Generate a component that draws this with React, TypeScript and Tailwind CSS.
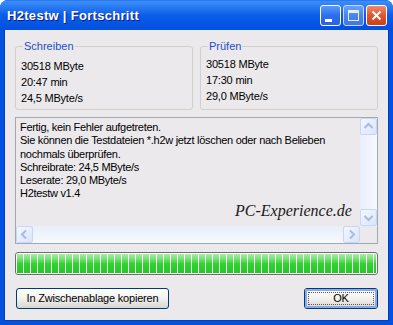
import React from "react";

const FONT = { fontFamily: '"Liberation Sans", Arial, sans-serif' };

function ScrollBtn({ dir }: { dir: "up" | "down" | "left" | "right" }) {
  const paths: Record<string, string> = {
    up: "M4.5 10 L8.5 6 L12.5 10",
    down: "M4.5 7 L8.5 11 L12.5 7",
    left: "M10 4.5 L6 8.5 L10 12.5",
    right: "M7 4.5 L11 8.5 L7 12.5",
  };
  return (
    <div className="w-[17px] h-[17px] shrink-0 rounded-[2px] border border-[#c8d6f8] bg-gradient-to-br from-[#f4f7fe] to-[#d9e4fb]">
      <svg width="15" height="15" viewBox="1 1 15 15">
        <path d={paths[dir]} fill="none" stroke="#a8bbe6" strokeWidth="2" />
      </svg>
    </div>
  );
}

function CaptionButtons() {
  return (
    <div className="flex gap-[2px] pr-[6px]">
      <div className="w-[21px] h-[21px] rounded-[3px] border border-white bg-gradient-to-b from-[#5d99f8] via-[#2d6ef0] to-[#2a63dc] relative">
        <div className="absolute left-[4px] bottom-[3px] w-[7px] h-[3px] bg-white" />
      </div>
      <div className="w-[21px] h-[21px] rounded-[3px] border border-[#c7d7fb] bg-gradient-to-b from-[#6aa0f6] via-[#4b84ee] to-[#4177e0] flex items-center justify-center">
        <div className="w-[11px] h-[11px] border border-[#e3ecfd] border-t-[3px]" />
      </div>
      <div className="w-[21px] h-[21px] rounded-[3px] border border-white bg-gradient-to-b from-[#f08a68] via-[#e2552c] to-[#c9401b] flex items-center justify-center">
        <svg width="11" height="11" viewBox="0 0 11 11">
          <path d="M1.5 1.5 L9.5 9.5 M9.5 1.5 L1.5 9.5" stroke="white" strokeWidth="2" />
        </svg>
      </div>
    </div>
  );
}

function GroupBox({ title, lines, shift }: { title: string; lines: string[]; shift?: boolean }) {
  return (
    <fieldset className="flex-1 border border-[#d2d0c8] rounded-[3px] px-[5px] pb-[1px]">
      <legend className="ml-[2px] px-[1px] text-[11px] leading-[14px] text-[#1c4fc8]">{title}</legend>
      <div className={shift ? "pt-[3px] pb-[4px]" : "pt-[5px] pb-[2px]"}>
        {lines.map((l) => (
          <div key={l} className="text-[11px] leading-[16px] tracking-[-0.2px] text-black">
            {l}
          </div>
        ))}
      </div>
    </fieldset>
  );
}

function XpButton({ children, focused, className }: { children: React.ReactNode; focused?: boolean; className: string }) {
  return (
    <button
      className={`relative h-[21px] rounded-[3px] border border-[#003c74] bg-gradient-to-b from-white via-[#f2f2ef] to-[#d8d6d0] text-[11px] tracking-[-0.2px] text-black ${className}`}
    >
      {focused && <div className="absolute inset-0 rounded-[2px] border-2 border-[#8aa9ee]" />}
      {focused && <div className="absolute inset-[3px] border border-dotted border-[#6b5a3a]" />}
      <span className="relative leading-[13px]">{children}</span>
    </button>
  );
}

export default function App() {
  const segments = Array.from({ length: 53 });
  return (
    <div className="w-[393px] h-[325px] bg-white" style={FONT}>
      <div className="flex flex-col h-full rounded-t-[8px] overflow-hidden bg-[#0052e0]">
        {/* title bar */}
        <div className="h-[30px] shrink-0 flex items-center justify-between bg-gradient-to-b from-[#3d8ef8] via-[#0b5ce8] to-[#0250de] border-t border-[#2a79f2]">
          <span className="pl-[7px] text-[13px] font-bold text-white tracking-[0.3px] [text-shadow:1px_1px_0_#0a1c88]">
            H2testw | Fortschritt
          </span>
          <CaptionButtons />
        </div>

        {/* client */}
        <div className="flex-1 flex flex-col mx-[4px] mb-[4px] bg-[#ebe9ec] border-l border-r border-b border-[#0a3bb8] px-[10px] pt-[9px]">
          <div className="flex gap-[7px]">
            <GroupBox title="Schreiben" lines={["30518 MByte", "20:47 min", "24,5 MByte/s"]} />
            <GroupBox title="Prüfen" lines={["30518 MByte", "17:30 min", "29,0 MByte/s"]} shift />
          </div>

          {/* text box */}
          <div className="relative mt-[7px] h-[127px] border border-[#a3a9b3] flex flex-col">
            <div className="flex flex-1 min-h-0">
              <div className="flex-1 pl-[4px] pt-[3px] text-[11px] leading-[13.3px] tracking-[-0.3px] text-black">
                <div>Fertig, kein Fehler aufgetreten.</div>
                <div>Sie können die Testdateien *.h2w jetzt löschen oder nach Belieben</div>
                <div>nochmals überprüfen.</div>
                <div>Schreibrate: 24,5 MByte/s</div>
                <div>Leserate: 29,0 MByte/s</div>
                <div>H2testw v1.4</div>
              </div>
              <div className="w-[17px] flex flex-col bg-gradient-to-r from-[#e8effc] to-[#f6f9fe]">
                <ScrollBtn dir="up" />
                <div className="flex-1" />
                <ScrollBtn dir="down" />
              </div>
            </div>
            <div className="h-[17px] flex">
              <div className="flex-1 flex bg-gradient-to-b from-[#e8effc] to-[#f6f9fe]">
                <ScrollBtn dir="left" />
                <div className="flex-1" />
                <ScrollBtn dir="right" />
              </div>
              <div className="w-[17px] bg-[#ebe9ec]" />
            </div>
            <span
              className="absolute left-[219px] top-[83px] text-[16px] leading-[20px] italic text-[#1a1a1a]"
              style={{ fontFamily: '"Liberation Serif", "Times New Roman", serif' }}
            >
              PC-Experience.de
            </span>
          </div>

          {/* progress */}
          <div className="mt-[8px] h-[23px] rounded-[3px] border border-[#6e6e6e] bg-white p-[1px] overflow-hidden">
            <div className="flex gap-[1px] h-full overflow-hidden">
              {segments.map((_, i) => (
                <div
                  key={i}
                  className="w-[6px] h-full shrink-0 bg-gradient-to-b from-[#a8eba8] via-[#2fd52f] to-[#27c427]"
                />
              ))}
            </div>
          </div>

          {/* buttons */}
          <div className="mt-[13px] flex justify-between pl-[1px]">
            <XpButton className="w-[153px]">In Zwischenablage kopieren</XpButton>
            <XpButton className="w-[74px]" focused>
              OK
            </XpButton>
          </div>
        </div>
      </div>
    </div>
  );
}
